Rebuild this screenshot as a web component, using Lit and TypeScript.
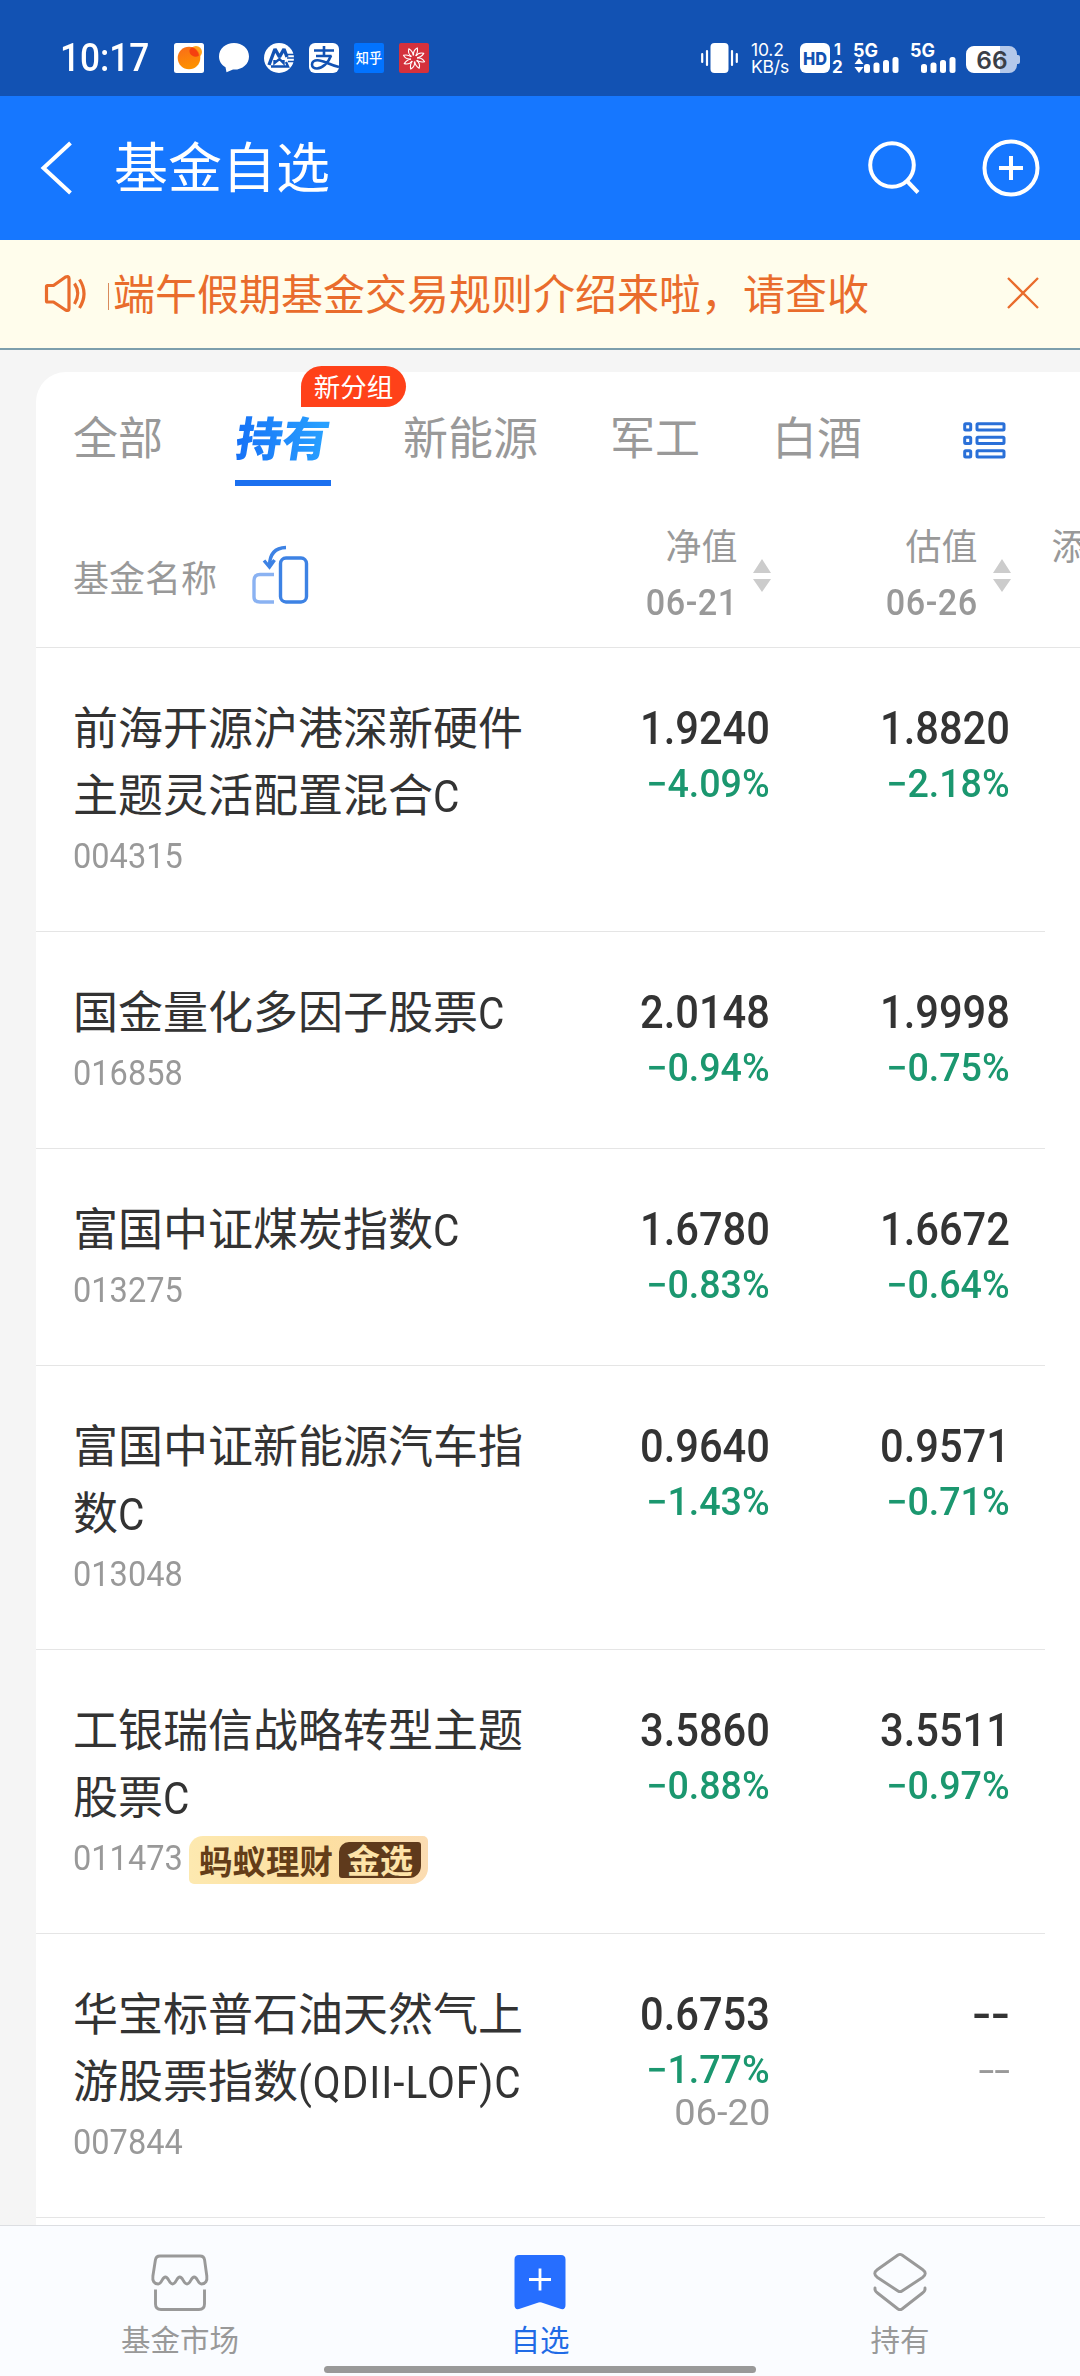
import { LitElement, html, css, svg, nothing } from "lit";
import { customElement, property } from "lit/decorators.js";

interface Fund {
  name: string;
  latin: string;
  code: string;
  gold?: boolean;
  nav: string;
  navPct: string;
  navDate?: string;
  est: string;
  estPct: string;
}

const FUNDS: Fund[] = [
  { name: "前海开源沪港深新硬件主题灵活配置混合", latin: "C", code: "004315", nav: "1.9240", navPct: "−4.09%", est: "1.8820", estPct: "−2.18%" },
  { name: "国金量化多因子股票", latin: "C", code: "016858", nav: "2.0148", navPct: "−0.94%", est: "1.9998", estPct: "−0.75%" },
  { name: "富国中证煤炭指数", latin: "C", code: "013275", nav: "1.6780", navPct: "−0.83%", est: "1.6672", estPct: "−0.64%" },
  { name: "富国中证新能源汽车指数", latin: "C", code: "013048", nav: "0.9640", navPct: "−1.43%", est: "0.9571", estPct: "−0.71%" },
  { name: "工银瑞信战略转型主题股票", latin: "C", code: "011473", gold: true, nav: "3.5860", navPct: "−0.88%", est: "3.5511", estPct: "−0.97%" },
  { name: "华宝标普石油天然气上游股票指数", latin: "(QDII-LOF)C", code: "007844", nav: "0.6753", navPct: "−1.77%", navDate: "06-20", est: "--", estPct: "--" },
];

const FONT = css`
  :host {
    display: block;
    box-sizing: border-box;
    font-family: Roboto, "Noto Sans CJK SC", sans-serif;
  }
  svg { display: block; flex: none; overflow: visible; }
`;

@customElement("status-bar")
class StatusBar extends LitElement {
  static styles = [FONT, css`
    :host { height: 96px; background: #1252b3; color: #fff; }
    .bar { display: flex; align-items: center; height: 96px; box-sizing: border-box; padding: 20px 60px 0 60px; }
    .time { width: 114px; font-size: 38.500px; line-height: 38px; font-weight: 500; }
    .time span { display: inline-block; transform: scaleX(0.915); transform-origin: left; }
    .apps { display: flex; gap: 15px; flex: 1; }
    .vibrate { margin-right: 13px; }
    .speed { width: 38px; margin-right: 11px; font-size: 17.500px; line-height: 17px; letter-spacing: -0.2px; font-family: Inter, Roboto, sans-serif; font-weight: 400; white-space: nowrap; }
    .hd { margin-right: 11px; }
    .sig { margin-right: 12px; }
    .sig2 { margin-right: 10px; }
    .t { font-family: Inter, Roboto, sans-serif; }
    .cjk { font-family: "Noto Sans CJK SC", sans-serif; }
  `];

  private signal(arrows: boolean) {
    return svg`
      <text class="t" x="-1" y="14" font-size="18.500" font-weight="700" fill="#fff" textLength="25" lengthAdjust="spacingAndGlyphs">5G</text>
      ${arrows ? svg`<path d="M5 15l4.500 6h-9zM5 30l4.500-6h-9z" fill="#fff"/>` : nothing}
      <rect x="10" y="21" width="6" height="9" rx="2.500" fill="#fff"/>
      <rect x="19.500" y="19.500" width="6" height="10.500" rx="2.500" fill="#fff"/>
      <rect x="29" y="17" width="6" height="13" rx="2.500" fill="#fff"/>
      <rect x="38.500" y="14" width="6" height="16" rx="2.500" fill="#fff"/>`;
  }

  render() {
    return html`<div class="bar">
      <div class="time"><span>10:17</span></div>
      <div class="apps">
        <svg width="30" height="30" viewBox="0 0 30 30">
          <defs><linearGradient id="sun" x1="0" y1="0" x2="0.3" y2="1"><stop offset="0" stop-color="#fa6b1a"/><stop offset="1" stop-color="#fd9000"/></linearGradient></defs>
          <rect width="30" height="30" rx="2.500" fill="#fff"/>
          <circle cx="22" cy="9" r="6" fill="#ffa21c"/>
          <circle cx="15" cy="15" r="11.300" fill="url(#sun)"/>
          <path d="M15.500 7a6 6 0 0 0 9.500 5.500A11.300 11.300 0 0 0 18 4.200 6 6 0 0 0 15.500 7z" fill="#f5400f"/>
        </svg>
        <svg width="30" height="30" viewBox="0 0 30 30">
          <path d="M15 0C6.700 0 0 5.800 0 13.400c0 4.500 2.400 8.400 6.500 10.800L7.500 29.300l6.500-2.800c9 .6 16-5.400 16-13.100C30 5.800 23.300 0 15 0z" fill="#fff"/>
        </svg>
        <svg width="30" height="30" viewBox="0 0 30 30">
          <circle cx="15" cy="15" r="15" fill="#fff"/>
          <path d="M5 22L11 6l4.500 8L20 6l3 8" fill="none" stroke="#1252b3" stroke-width="3.400" stroke-linejoin="bevel"/>
          <path d="M10.500 17v3L15.500 16l4 4v-3M7 23.500h17L22 19" fill="none" stroke="#1252b3" stroke-width="2.400"/>
          <path d="M22 11.500h8M23 15h7M24 18.500h6" stroke="#1252b3" stroke-width="1.500"/>
        </svg>
        <svg width="30" height="30" viewBox="0 0 30 30">
          <rect width="30" height="30" rx="6" fill="#fff"/>
          <path d="M15 3v9M5 7.500h20M7 13h15.500" fill="none" stroke="#1252b3" stroke-width="2.600"/>
          <path d="M22 12.500C19.500 20 13 25.500 8 25.500c-3 0-5-1.500-5-4 0-2.600 2.500-4.300 5.500-4.300 6 0 11 4.300 21.500 6.800" fill="none" stroke="#1252b3" stroke-width="2.600"/>
        </svg>
        <svg width="30" height="30" viewBox="0 0 30 30">
          <rect width="30" height="30" rx="2" fill="#0273ff"/>
          <text class="cjk" x="15" y="19.800" font-size="13.200" font-weight="500" fill="#fff" text-anchor="middle">知乎</text>
        </svg>
        <svg width="30" height="30" viewBox="0 0 30 30">
          <rect width="30" height="30" rx="2" fill="#d4313c"/>
          <g fill="none" stroke="#fff" stroke-width="1.100" stroke-linejoin="round">
            ${[0, 45, 90, 135, 180, 225, 270, 315].map(a => svg`<path transform="rotate(${a + 12} 15 15.500)" d="M14 12.500Q12 8 16 4.500Q18 9 16 12.500"/>`)}
          </g>
        </svg>
      </div>
      <svg class="vibrate" width="37" height="30" viewBox="0 0 37 30">
        <rect x="9.500" width="18" height="30" rx="4" fill="#fff"/>
        <path d="M1.200 11v8M6 8v14M31 8v14M35.800 11v8" stroke="#fff" stroke-width="2.200" stroke-linecap="round"/>
      </svg>
      <div class="speed">10.2<br />KB/s</div>
      <svg class="hd" width="43" height="30" viewBox="0 0 43 30">
        <rect width="30" height="30" rx="6" fill="#fff"/>
        <text class="t" x="3" y="21.500" font-size="18" font-weight="800" fill="#1252b3" textLength="24" lengthAdjust="spacingAndGlyphs">HD</text>
        <text class="t" x="34" y="12" font-size="16" font-weight="700" fill="#fff">1</text>
        <text class="t" x="32" y="30" font-size="17" font-weight="700" fill="#fff">2</text>
      </svg>
      <svg class="sig" width="45" height="30" viewBox="0 0 45 30">${this.signal(true)}</svg>
      <svg class="sig2" width="45" height="30" viewBox="0 0 45 30">${this.signal(false)}</svg>
      <svg width="54" height="30" viewBox="0 0 54 30">
        <path d="M9 3h25v27H9a8 8 0 0 1-9-8V11a8 8 0 0 1 9-8z" fill="#fff"/>
        <path d="M34 3h9a8 8 0 0 1 8 8v1h1q2 0 2 2v5q0 2-2 2h-1v1a8 8 0 0 1-8 8h-9z" fill="#b4c8ea"/>
        <text class="t" x="26" y="25.500" font-size="24.500" font-weight="600" fill="#3b3f47" text-anchor="middle">66</text>
      </svg>
    </div>`;
  }
}

@customElement("title-bar")
class TitleBar extends LitElement {
  static styles = [FONT, css`
    :host { height: 144px; background: #1677ff; color: #fff; }
    .bar { display: flex; align-items: center; height: 144px; box-sizing: border-box; padding: 0 40px; }
    .title { flex: 1; margin: 0 0 0 42px; font-size: 54px; line-height: 70px; font-weight: 400; padding-top: 4px; }
    .search { margin-right: 63px; }
  `];
  render() {
    return html`<div class="bar">
      <svg width="32" height="54" viewBox="0 0 32 54"><path d="M30.500 2L3.500 27l27 25" fill="none" stroke="#fff" stroke-width="4"/></svg>
      <h1 class="title">基金自选</h1>
      <svg class="search" width="52" height="58" viewBox="0 0 52 58">
        <circle cx="25" cy="26" r="21.800" fill="none" stroke="#fff" stroke-width="4"/>
        <path d="M40 42l11 11.500" stroke="#fff" stroke-width="4"/>
      </svg>
      <svg width="58" height="58" viewBox="0 0 58 58">
        <circle cx="29" cy="29" r="26.500" fill="none" stroke="#fff" stroke-width="4"/>
        <path d="M29 17v24M17 29h24" stroke="#fff" stroke-width="4"/>
      </svg>
    </div>`;
  }
}

@customElement("notice-bar")
class NoticeBar extends LitElement {
  static styles = [FONT, css`
    :host { height: 110px; background: #fffdec; color: #e96c2c; border-bottom: 2px solid #7d9fac; }
    .bar { display: flex; align-items: center; height: 108px; box-sizing: border-box; padding: 0 41px 0 44px; }
    .view { flex: 1; display: flex; align-items: center; margin-left: 20px; padding-top: 4px; overflow: hidden; font-size: 42px; line-height: 60px; white-space: nowrap; }
    .sliver { width: 1px; height: 27px; margin-right: 4px; background: #d98a5c; }
    .close { margin-top: -3px; }
  `];
  render() {
    return html`<div class="bar">
      <svg width="44" height="40" viewBox="0 0 44 40">
        <g fill="none" stroke="currentColor" stroke-width="3.200" stroke-linejoin="round">
          <path d="M3.500 11.500h6L21.500 3q3.500-1.500 3.500 1.500v30q0 3-3.500 1.500L9.500 28h-6q-1 0-1-1V12.500q0-1 1-1z"/>
          <path d="M30.500 9.500q6.500 9.500 0 20.500M35.500 5.500q9 14 0 28.500"/>
        </g>
      </svg>
      <div class="view"><span class="sliver"></span>端午假期基金交易规则介绍来啦，请查收</div>
      <svg class="close" width="32" height="32" viewBox="0 0 32 32"><path d="M1 1l30 30M31 1L1 31" stroke="currentColor" stroke-width="2.300"/></svg>
    </div>`;
  }
}

@customElement("group-tabs")
class GroupTabs extends LitElement {
  static styles = [FONT, css`
    :host { height: 114px; color: #999; }
    .tabs { display: flex; gap: 72px; height: 114px; padding-left: 37px; font-size: 45px; line-height: 66px; white-space: nowrap; }
    .tab { padding-top: 35px; }
    .active { position: relative; width: 96px; height: 73px; border-bottom: 6px solid #1b70f0; }
    .label { display: block; width: 104px; margin-left: 1px; font-weight: 900; font-size: 46.500px; transform: skewX(-9deg); background: linear-gradient(75deg, #1670f6 5%, #28a0ff 80%); background-clip: text; -webkit-background-clip: text; color: transparent; }
    .badge { position: absolute; left: 66px; top: -6px; width: 105px; height: 41px; border-radius: 21px 21px 21px 0; background: #ff4119; color: #fff; font-size: 26.500px; line-height: 43px; text-align: center; }
    .list { margin: 50px 0 0 29px; }
  `];
  render() {
    return html`<div class="tabs">
      <span class="tab">全部</span>
      <div class="tab active"><span class="label">持有</span><span class="badge">新分组</span></div>
      <span class="tab">新能源</span>
      <span class="tab">军工</span>
      <span class="tab">白酒</span>
      <svg class="list" width="43" height="37" viewBox="0 0 43 37">
        <g fill="none" stroke="#2a70d8" stroke-width="3">
          ${[1.7, 15.2, 28.7].map(y => svg`<rect x="1.700" y=${y} width="6" height="6.300" rx="1"/><rect x="14" y=${y} width="27" height="6.300" rx="1"/>`)}
        </g>
      </svg>
    </div>`;
  }
}

@customElement("sort-head")
class SortHead extends LitElement {
  @property() label = "";
  @property() date = "";
  static styles = [FONT, css`
    .head { display: flex; justify-content: flex-end; align-items: center; color: #999; }
    .texts { display: flex; flex-direction: column; text-align: right; font-size: 36px; line-height: 55px; margin-right: 15px; }
    .date { font-weight: 500; display: block; transform: scaleX(0.95); transform-origin: right; letter-spacing: 0.5px; }
  `];
  render() {
    return html`<div class="head">
      <div class="texts"><span>${this.label}</span><span class="date">${this.date}</span></div>
      <svg width="18" height="34" viewBox="0 0 18 34"><path d="M9 0l9 14H0zM9 33l9-13H0z" fill="#ccc"/></svg>
    </div>`;
  }
}

@customElement("fund-row")
class FundRow extends LitElement {
  @property({ attribute: false }) fund!: Fund;
  static styles = [FONT, css`
    :host { margin-right: 35px; border-bottom: 1px solid #e5e5e5; }
    .row { display: grid; grid-template-columns: 457px 240px 240px; padding: 47px 0 47px 37px; color: #333; }
    .name { font-size: 45px; line-height: 67px; padding-top: 1px; margin-bottom: -1px; }
    .latin { display: inline-block; white-space: nowrap; letter-spacing: 1.1px; transform: scaleX(0.9); transform-origin: left; margin-right: -30px; }
    .meta { display: flex; align-items: center; height: 55px; }
    .code { width: 108px; font-size: 35px; line-height: 55px; color: #999; font-weight: 400; }
    .code span { display: inline-block; transform: scaleX(0.93); transform-origin: left; }
    .gold { display: flex; align-items: center; gap: 6px; box-sizing: border-box; width: 239px; height: 48px; margin: 2px 0 0 8px; padding: 0 6px 0 10px; border-radius: 14px 5px 16px 5px; background: linear-gradient(90deg, #fde9b0, #fddfa0 55%, #fbdcb2); color: #643d18; font-family: "Noto Sans CJK SC", sans-serif; font-size: 33.500px; line-height: 36px; font-weight: 700; white-space: nowrap; }
    .pick { box-sizing: border-box; width: 82px; height: 36px; padding-left: 8px; border-radius: 10px 3px 12px 3px; background: #5f3a1c; color: #fde3a8; font-size: 33px; line-height: 35px; }
    .nums { display: flex; flex-direction: column; align-items: flex-end; text-align: right; white-space: nowrap; height: 0; }
    .val { font-size: 45.500px; line-height: 67px; font-weight: 500; transform: scaleX(0.915); transform-origin: right; }
    .pct { font-size: 38px; line-height: 44px; font-weight: 500; color: #1b976f; transform: scaleX(0.99); transform-origin: right; }
    .date { font-size: 37px; line-height: 42px; color: #999; transform: scaleX(1.03); transform-origin: right; }
    .dash { transform: scaleX(1.22); }
    .none { font-weight: 400; color: #999; transform: scaleX(1.500); }
  `];
  render() {
    const f = this.fund;
    return html`<div class="row">
      <div>
        <div class="name">${f.name}<span class="latin">${f.latin}</span></div>
        <div class="meta">
          <div class="code"><span>${f.code}</span></div>
          ${f.gold ? html`<div class="gold">蚂蚁理财<span class="pick">金选</span></div>` : nothing}
        </div>
      </div>
      <div class="nums">
        <span class="val">${f.nav}</span><span class="pct">${f.navPct}</span>
        ${f.navDate ? html`<span class="date">${f.navDate}</span>` : nothing}
      </div>
      <div class="nums">
        <span class="val ${f.est === "--" ? "dash" : ""}">${f.est}</span><span class="pct ${f.estPct === "--" ? "none" : ""}">${f.estPct}</span>
      </div>
    </div>`;
  }
}

@customElement("bottom-nav")
class BottomNav extends LitElement {
  static styles = [FONT, css`
    :host { height: 151px; background: #fafcff; border-top: 1px solid #dcdee2; position: relative; }
    .items { display: grid; grid-template-columns: repeat(3, 1fr); }
    .item { display: flex; flex-direction: column; align-items: center; padding-top: 25px; color: #999; font-size: 29.500px; line-height: 44px; }
    .on { color: #1f6be6; }
    .label { margin-top: 6px; }
    .home { position: absolute; left: 324px; bottom: 3px; width: 432px; height: 7px; border-radius: 4px; background: #999; }
  `];
  render() {
    return html`<div class="items">
        <div class="item">
          <svg width="60" height="62" viewBox="0 0 60 62"><g fill="none" stroke="#999" stroke-width="2.900" stroke-linejoin="round">
            <path d="M10 5h40q4 0 4.600 4l2.200 16c.700 5-1.400 8-5.400 8-3.500 0-4-7-7.200-7s-3.700 7-7.200 7-4-7-7.200-7-3.700 7-7.200 7-4-7-7.200-7-3.700 7-7.200 7c-4 0-6-3-5.300-8L5.400 9Q6 5 10 5z"/>
            <path d="M5.500 38.500V53q0 5.500 5.500 5.500h38q5.500 0 5.500-5.500V38.500"/></g></svg>
          <span class="label">基金市场</span>
        </div>
        <div class="item on">
          <svg width="60" height="62" viewBox="0 0 60 62"><path d="M9 4h42q4.500 0 4.500 4.500v45.500q0 5-4.500 4L33 52q-3-1.500-6 0L9 58q-4.500 1-4.500-4v-45.500Q4.500 4 9 4z" fill="#266eff"/>
            <path d="M30 17.500v22M19 28.500h22" stroke="#fff" stroke-width="2.800"/></svg>
          <span class="label">自选</span>
        </div>
        <div class="item">
          <svg width="60" height="62" viewBox="0 0 60 62"><g fill="none" stroke="#999" stroke-width="2.900" stroke-linejoin="round" stroke-linecap="round">
            <path d="M28 4q2-1.200 4 0l20.500 14.500q5.500 4 0 8L32 40q-2 1.300-4 0L7.500 26.500q-5.500-4 0-8z"/>
            <path d="M5 37q-.5 3 2.500 5L28 58q2 1.300 4 0l20.500-16q3-2 2.500-5"/></g></svg>
          <span class="label">持有</span>
        </div>
      </div>
      <div class="home"></div>`;
  }
}

@customElement("app-root")
class AppRoot extends LitElement {
  static styles = [FONT, css`
    :host { width: 1080px; height: 2376px; overflow: hidden; background: #f5f5f5; }
    .page { display: flex; flex-direction: column; height: 2376px; }
    .card { flex: 1; min-height: 0; margin: 22px 0 0 36px; background: #fff; border-radius: 30px 0 0 0; }
    .thead { display: flex; align-items: center; box-sizing: border-box; height: 162px; border-bottom: 1px solid #e5e5e5; padding: 18px 0 0 37px; overflow: hidden; white-space: nowrap; font-size: 36px; color: #999; }
    .first { flex: none; width: 178px; line-height: 50px; padding-top: 8px; }
    .flip { margin-top: -1px; }
    .c1 { flex: none; width: 461.500px; }
    .c2 { flex: none; width: 240px; }
    .c3 { flex: none; margin-left: 41px; line-height: 55px; align-self: flex-start; margin-top: 17px; }
  `];
  render() {
    return html`<div class="page">
      <status-bar></status-bar>
      <title-bar></title-bar>
      <notice-bar></notice-bar>
      <div class="card">
        <group-tabs></group-tabs>
        <div class="thead">
          <div class="first">基金名称</div>
          <svg class="flip" width="58" height="62" viewBox="0 0 58 62"><g fill="none" stroke-width="3.400">
            <path d="M23 30.500H9q-6 0-6 6V53q0 5 6 5H23" stroke="#8ab2f2"/>
            <rect x="29.500" y="14" width="26" height="44" rx="5.500" stroke="#3d82e4"/>
            <path d="M35 3.500Q18.500 4 18.500 22M13 16.500l5.500 6.500 5-7" stroke="#3d82e4"/></g></svg>
          <sort-head class="c1" label="净值" date="06-21"></sort-head>
          <sort-head class="c2" label="估值" date="06-26"></sort-head>
          <div class="c3">添</div>
        </div>
        ${FUNDS.map(f => html`<fund-row .fund=${f}></fund-row>`)}
      </div>
      <bottom-nav></bottom-nav>
    </div>`;
  }
}
